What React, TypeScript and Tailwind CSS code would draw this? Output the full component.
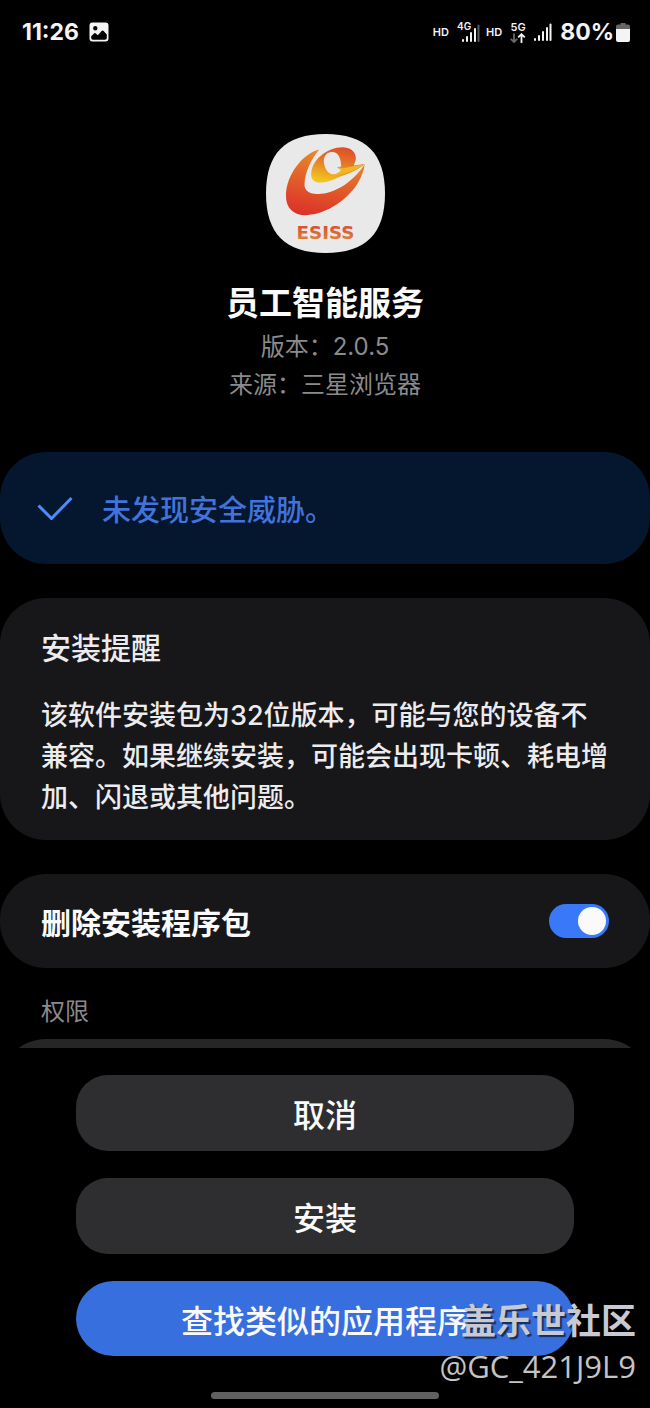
import { useState } from "react";

function PictureIcon() {
  return (
    <svg viewBox="0 0 20 20" className="h-5 w-5" aria-hidden="true">
      <path
        fillRule="evenodd"
        fill="#f4f4f4"
        d="M3.5 0.5h13a3 3 0 0 1 3 3v13a3 3 0 0 1-3 3h-13a3 3 0 0 1-3-3v-13a3 3 0 0 1 3-3zM6.3 4a2.200 2.200 0 1 0 0 4.400a2.200 2.200 0 0 0 0-4.400zM2.200 14.200V16a1.800 1.800 0 0 0 1.800 1.800h12a1.800 1.800 0 0 0 1.800-1.800v-3.500L14.600 9a1.400 1.400 0 0 0-2 0l-3.800 4.200l-1.900-1.700a1.400 1.400 0 0 0-1.900 0z"
      />
    </svg>
  );
}

function SignalBars({ weak = false }: { weak?: boolean }) {
  return (
    <svg viewBox="0 0 18 18" className="h-[18px] w-[18px]" aria-hidden="true" fill="#f4f4f4">
      <rect x="0" y="15" width="2" height="3" rx="1" />
      <rect x="4" y="12" width="2" height="6" rx="1" />
      <rect x="8" y="8" width="2" height="10" rx="1" />
      <rect x="12" y="4" width="2" height="14" rx="1" />
      <rect x="15.5" y="0.5" width="2" height="17.5" rx="1" fill={weak ? "#5a5a5a" : "#f4f4f4"} />
    </svg>
  );
}

function DataArrows() {
  return (
    <svg viewBox="0 0 16 10" className="h-[10px] w-4" aria-hidden="true" fill="none" strokeWidth="1.8">
      <path d="M4 0.5V9M0.8 5.8L4 9L7.2 5.8" stroke="#6a6a6a" />
      <path d="M11.5 10V1.2M8.2 4.4L11.5 1.2L14.8 4.4" stroke="#f4f4f4" />
    </svg>
  );
}

function BatteryIcon() {
  return (
    <svg viewBox="0 0 14 19" className="h-[19px] w-[14px]" aria-hidden="true">
      <path d="M4.5 0h5v1.5H12a2 2 0 0 1 2 2V7H0V3.500a2 2 0 0 1 2-2h2.500z" fill="#666" />
      <path d="M0 6h14v11a2 2 0 0 1-2 2H2a2 2 0 0 1-2-2z" fill="#f4f4f4" />
    </svg>
  );
}

function AppLogo() {
  return (
    <svg viewBox="30 28 358 358" className="h-[119px] w-[119px]" role="img" aria-label="ESISS">
      <defs>
        <linearGradient id="swoosh" x1="0.6" y1="0" x2="0.35" y2="1">
          <stop offset="0" stopColor="#e8902c" />
          <stop offset="0.5" stopColor="#e2602a" />
          <stop offset="1" stopColor="#dc3328" />
        </linearGradient>
        <linearGradient id="ring" x1="0.7" y1="0" x2="0.4" y2="1">
          <stop offset="0" stopColor="#dd4a25" />
          <stop offset="0.45" stopColor="#e4782a" />
          <stop offset="1" stopColor="#f2c51e" />
        </linearGradient>
        <linearGradient id="word" x1="0" y1="0" x2="0" y2="1">
          <stop offset="0" stopColor="#d8402c" />
          <stop offset="1" stopColor="#e08a3c" />
        </linearGradient>
      </defs>
      <path
        d="M209 28C330 28 388 86 388 207S330 386 209 386S30 328 30 207S88 28 209 28z"
        fill="#e9e9ea"
      />
      <path
        d="M190 75C140 88 92 150 90 212C89 252 115 274 155 272C215 268 275 225 305 178C317 157 325 138 327 118C300 162 250 202 195 208C160 212 144 198 146 178C147 145 165 105 190 75z"
        fill="url(#swoosh)"
      />
      <path
        fillRule="evenodd"
        d="M166 150C166 108 212 68 262 68C290 69 303 88 300 106L294 123L327 118C300 142 266 150 244 160C222 172 190 178 176 170C168 165 166 158 166 150zM228 82C210 83 201 99 205 118C209 138 221 150 234 149C245 148 252 142 256 136L244 128L256 126C256 102 248 81 228 82z"
        fill="url(#ring)"
      />
      <path d="M243 127L262 131L327 118C306 135 284 142 262 147C250 150 240 154 228 154C244 148 252 142 256 136z" fill="#f0b820" />
      <text
        x="209"
        y="343"
        textAnchor="middle"
        fontSize="55"
        fontWeight="700"
        fontFamily="'DejaVu Sans', sans-serif"
        fill="url(#word)"
      >
        ESISS
      </text>
    </svg>
  );
}

function StatusBar() {
  return (
    <header className="flex h-16 items-center justify-between pl-[22px] pr-5 font-['Inter','Noto_Sans_CJK_SC',sans-serif] text-[#f4f4f4]">
      <div className="flex items-center gap-2.5">
        <span className="text-[23px] font-bold leading-7">11:26</span>
        <PictureIcon />
      </div>
      <div className="flex items-center">
        <span className="mr-2 text-[11px] font-semibold">HD</span>
        <span className="relative flex h-6 w-[23px] items-end justify-end pb-0.5">
          <span className="absolute left-0 top-0 text-[10px] font-semibold leading-3">4G</span>
          <SignalBars weak />
        </span>
        <span className="ml-1.5 text-[11px] font-semibold">HD</span>
        <span className="ml-2 flex flex-col items-center">
          <span className="text-[11px] font-semibold leading-3">5G</span>
          <DataArrows />
        </span>
        <span className="ml-2 mr-2">
          <SignalBars />
        </span>
        <span className="mr-0.5 text-[23px] font-bold leading-7">80%</span>
        <BatteryIcon />
      </div>
    </header>
  );
}

export default function App() {
  const [deletePackage, setDeletePackage] = useState(true);

  return (
    <div className="relative flex min-h-screen flex-col bg-black font-['Noto_Sans_CJK_SC',sans-serif] text-[#fafafa]">
      <StatusBar />

      <main>
        <section className="flex flex-col items-center pt-[70px]">
          <AppLogo />
          <h1 className="mt-[22px] text-[33px] font-bold leading-[53px]">员工智能服务</h1>
          <p className="font-['Inter','Noto_Sans_CJK_SC',sans-serif] text-2xl leading-[38px] text-[#8b8b8d]">
            版本：2.0.5
          </p>
          <p className="font-['Inter','Noto_Sans_CJK_SC',sans-serif] text-2xl leading-[38px] text-[#8b8b8d]">
            来源：三星浏览器
          </p>
        </section>

        <section className="mt-12 flex h-28 items-center rounded-[46px] bg-[#04172f] pl-[37px]">
          <svg viewBox="0 0 36 24" className="h-6 w-9" aria-hidden="true">
            <path d="M1.500 9.500L14.500 22.500L34.500 2" fill="none" stroke="#4b8df8" strokeWidth="3" />
          </svg>
          <p className="ml-[29px] text-[29px] font-medium leading-10 text-[#4273dc]">未发现安全威胁。</p>
        </section>

        <section className="mt-[34px] rounded-[46px] bg-[#17171a] pb-[22px] pl-[41px] pr-10 pt-[26px] text-[#ececee]">
          <h2 className="text-[30px] font-medium leading-[44px]">安装提醒</h2>
          <p className="mt-[27px] font-['Inter','Noto_Sans_CJK_SC',sans-serif] text-[27px] font-medium leading-[41px]">
            该软件安装包为32位版本，可能与您的设备不兼容。如果继续安装，可能会出现卡顿、耗电增加、闪退或其他问题。
          </p>
        </section>

        <label className="mt-[34px] flex h-[94px] items-center justify-between rounded-[46px] bg-[#17171a] pl-[41px] pr-[41px]">
          <span className="text-[30px] font-bold leading-[44px]">删除安装程序包</span>
          <input
            type="checkbox"
            role="switch"
            checked={deletePackage}
            onChange={(event) => setDeletePackage(event.target.checked)}
            className="flex h-[34px] w-[60px] cursor-pointer appearance-none items-center rounded-full bg-[#55555a] px-[3px] before:h-7 before:w-7 before:rounded-full before:bg-[#fafafa] checked:justify-end checked:bg-[#3a78fa]"
          />
        </label>

        <h2 className="mt-[22px] pl-[41px] text-2xl leading-10 text-[#8b8b8d]">权限</h2>
        <div className="mt-[9px] h-[9px] overflow-hidden">
          <div className="h-28 rounded-[46px] bg-[#262626]" />
        </div>
      </main>

      <footer className="flex flex-col items-center px-[76px] pb-2 pt-[27px] text-[32px] font-medium leading-[46px]">
        <button type="button" className="h-[76px] w-full rounded-[32px] bg-[#2e2e31]">
          取消
        </button>
        <button type="button" className="mt-[27px] h-[76px] w-full rounded-[32px] bg-[#2e2e31]">
          安装
        </button>
        <button type="button" className="mt-[27px] h-[75px] w-full rounded-full bg-[#386fde]">
          查找类似的应用程序
        </button>
        <div className="mt-9 h-[7px] w-[228px] rounded-full bg-[#616161]" />
      </footer>

      <div className="pointer-events-none absolute bottom-[18px] right-[14px] flex flex-col items-end text-[#c4c4c6]">
        <span className="text-[35px] font-bold leading-[46px] text-[#c8cad3] [text-shadow:2px_2px_1px_rgba(0,0,0,0.6)]">
          盖乐世社区
        </span>
        <span className="font-['Open_Sans','Noto_Sans',sans-serif] text-[31px] leading-[48px]">@GC_421J9L9</span>
      </div>
    </div>
  );
}
